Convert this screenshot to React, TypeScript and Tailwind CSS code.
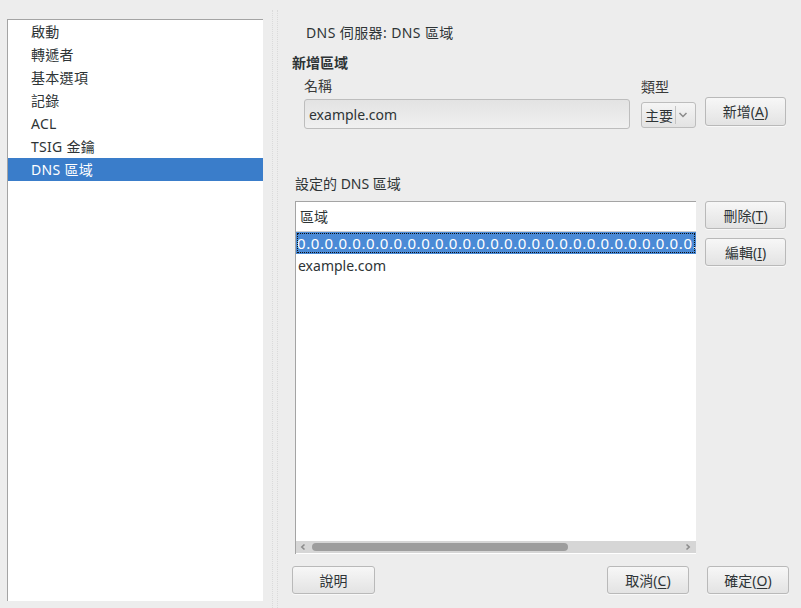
const navItems = ['啟動', '轉遞者', '基本選項', '記錄', 'ACL', 'TSIG 金鑰', 'DNS 區域']

const font = { fontFamily: '"Noto Sans", "Noto Sans CJK TC", sans-serif' }

function Btn({ label, mn, className }: { label: string; mn?: string; className?: string }) {
  return (
    <div
      className={`flex items-center justify-center border border-[#b9b9b9] rounded-[3px] bg-linear-to-b from-[#f7f7f7] to-[#e3e3e3] text-[14px] text-[#2e3436] shadow-[0_1px_0_#f8f8f8] ${className ?? ''}`}
    >
      {mn ? (
        <span>
          {label}(<u className="underline-offset-2">{mn}</u>)
        </span>
      ) : (
        label
      )}
    </div>
  )
}

export default function App() {
  const zeros = '0.'.repeat(40)
  return (
    <div className="w-[801px] h-[608px] bg-[#ededed] flex overflow-hidden text-[#2e3436]" style={font}>
      {/* 左側選單 */}
      <div className="ml-[7px] mt-[19px] w-[256px] h-[582px] bg-white border-t border-l border-[#a4a4a4] text-[14px]">
        {navItems.map((item) => (
          <div
            key={item}
            className={`h-[23px] pl-[23px] flex items-center tracking-[0.3px] ${
              item === 'DNS 區域' ? 'bg-[#3a7dca] text-white' : ''
            }`}
          >
            {item}
          </div>
        ))}
      </div>

      {/* 分隔把手 */}
      <div className="ml-[9px] mt-[10px] w-[6px] h-[598px] border-x border-dotted border-[#dadada]" />

      {/* 右側內容 */}
      <div className="flex-1 pl-[13px] pt-[23px] flex flex-col text-[14px]">
        <div className="h-[20px] leading-[20px] ml-[15px] tracking-[0.4px]">DNS 伺服器: DNS 區域</div>
        <div className="h-[20px] leading-[20px] mt-[10px] ml-[1px] font-bold">新增區域</div>

        <div className="flex items-start mt-[3px] ml-[13px]">
          <div className="flex flex-col">
            <div className="h-[20px] leading-[20px] text-[#3a3a3a]">名稱</div>
            <div className="mt-[3px] w-[326px] h-[30px] border border-[#bdbdbd] rounded-[3px] bg-linear-to-b from-[#e3e3e3] to-[#f0f0f0] flex items-center pl-[4px]">
              example.com
            </div>
          </div>
          <div className="flex flex-col ml-[11px] mt-[1px]">
            <div className="h-[20px] leading-[20px] text-[#3a3a3a]">類型</div>
            <div className="mt-[5px] w-[55px] h-[26px] border border-[#bdbdbd] rounded-[3px] bg-linear-to-b from-[#f5f5f5] to-[#e3e3e3] flex items-center">
              <span className="pl-[3px]">主要</span>
              <span className="ml-[2px] h-[18px] border-l border-[#c4c4c4]" />
              <svg width="12" height="10" viewBox="0 0 12 10" className="ml-[1px]">
                <path d="M2.5 3 L6 6.5 L9.5 3" fill="none" stroke="#8a8a8a" strokeWidth="1.5" />
              </svg>
            </div>
          </div>
          <Btn label="新增" mn="A" className="ml-[9px] mt-[21px] w-[81px] h-[29px]" />
        </div>

        <div className="h-[20px] leading-[20px] mt-[45px] ml-[4px]">設定的 DNS 區域</div>

        <div className="flex items-start mt-[7px] ml-[4px]">
          <div className="w-[401px] h-[353px] bg-white border-t border-l border-[#a4a4a4] flex flex-col overflow-hidden">
            <div className="h-[30px] border-b border-[#cfcfcf] flex items-center pl-[4px]">區域</div>
            <div className="h-[22px] bg-[#4a8ad6] text-white flex items-center pl-[1px] whitespace-nowrap overflow-hidden outline-1 outline-dotted outline-[#111] -outline-offset-2 text-[15px] tracking-[0.6px]">
              {zeros}
            </div>
            <div className="h-[23px] flex items-center pl-[2px]">example.com</div>
            <div className="flex-1" />
            <div className="h-[12px] mb-[1px] bg-[#d6d6d6] flex items-center px-[4px]">
              <svg width="6" height="8" viewBox="0 0 6 8">
                <path d="M4.5 1.5 L1.8 4 L4.5 6.5" fill="none" stroke="#8c8c8c" strokeWidth="1.6" />
              </svg>
              <div className="ml-[6px] w-[256px] h-[8px] rounded-full bg-[#9d9d9d]" />
              <div className="flex-1" />
              <svg width="6" height="8" viewBox="0 0 6 8" className="mr-[1px]">
                <path d="M1.5 1.5 L4.2 4 L1.5 6.5" fill="none" stroke="#8c8c8c" strokeWidth="1.6" />
              </svg>
            </div>
          </div>
          <div className="flex flex-col ml-[9px]">
            <Btn label="刪除" mn="T" className="w-[81px] h-[28px]" />
            <Btn label="編輯" mn="I" className="mt-[9px] w-[81px] h-[28px]" />
          </div>
        </div>

        <div className="flex mt-[12px] ml-[1px] mr-[12px]">
          <Btn label="說明" className="w-[83px] h-[28px]" />
          <Btn label="取消" mn="C" className="ml-auto w-[82px] h-[28px]" />
          <Btn label="確定" mn="O" className="ml-[18px] w-[82px] h-[28px]" />
        </div>
      </div>
    </div>
  )
}
